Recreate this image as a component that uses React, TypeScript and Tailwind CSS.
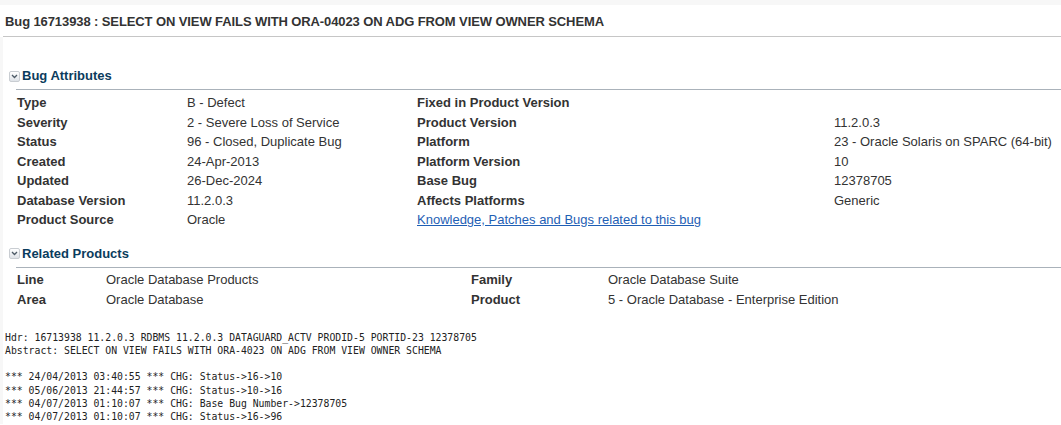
import React from "react";

const sans = { fontFamily: '"Liberation Sans", Arial, sans-serif' };

function Toggle() {
  return (
    <span className="inline-flex items-center justify-center w-[11px] h-[11px] rounded-[2px] border border-[#c9cdd2] bg-gradient-to-b from-[#ffffff] to-[#dfe3e8] mr-[2px]">
      <svg width="7" height="5" viewBox="0 0 7 5">
        <path d="M1 1 L3.5 3.5 L6 1" stroke="#4d5a66" strokeWidth="1.3" fill="none" />
      </svg>
    </span>
  );
}

function SectionHeader({ title }: { title: string }) {
  return (
    <div>
      <div className="flex items-center pl-[6px] h-[18px]">
        <Toggle />
        <span className="text-[13px] font-bold text-[#0b3c5d]">{title}</span>
      </div>
      <div className="ml-[13px] h-px bg-[#aab2ba] mt-[4px]" />
    </div>
  );
}

const attrs: [string, string, string, React.ReactNode][] = [
  ["Type", "B - Defect", "Fixed in Product Version", ""],
  ["Severity", "2 - Severe Loss of Service", "Product Version", "11.2.0.3"],
  ["Status", "96 - Closed, Duplicate Bug", "Platform", "23 - Oracle Solaris on SPARC (64-bit)"],
  ["Created", "24-Apr-2013", "Platform Version", "10"],
  ["Updated", "26-Dec-2024", "Base Bug", "12378705"],
  ["Database Version", "11.2.0.3", "Affects Platforms", "Generic"],
  ["Product Source", "Oracle", "", ""],
];

export default function App() {
  return (
    <div className="w-[1061px] h-[425px] bg-white text-[#333333] overflow-hidden" style={sans}>
      <div className="h-[5px] bg-[#f7f7f7]" />
      <div className="pl-[5px] pt-[9px] pb-[7px] text-[13px] font-bold text-[#333333] leading-[15px] tracking-[-0.1px]">
        Bug 16713938 : SELECT ON VIEW FAILS WITH ORA-04023 ON ADG FROM VIEW OWNER SCHEMA
      </div>
      <div className="ml-[3px] h-px bg-[#c6c6c6]" />
      <div className="flex">
        <div className="w-[3px] bg-[#f7f7f7] shrink-0" />
        <div className="flex-1">
          <div className="h-[30px]" />
          <SectionHeader title="Bug Attributes" />
          <div className="pt-[3px] text-[13px] leading-[19.5px]">
            {attrs.map(([l1, v1, l2, v2], i) => (
              <div key={i} className="flex h-[19.5px] items-center">
                <div className="w-[184px] pl-[14px] font-bold">{l1}</div>
                <div className="w-[230px]">{v1}</div>
                {i === 6 ? (
                  <a className="text-[#1f5fb5] underline" href="#">
                    Knowledge, Patches and Bugs related to this bug
                  </a>
                ) : (
                  <>
                    <div className="w-[417px] font-bold">{l2}</div>
                    <div>{v2}</div>
                  </>
                )}
              </div>
            ))}
          </div>
          <div className="h-[15px]" />
          <SectionHeader title="Related Products" />
          <div className="pt-[2px] text-[13px] leading-[20px]">
            {[
              ["Line", "Oracle Database Products", "Family", "Oracle Database Suite"],
              ["Area", "Oracle Database", "Product", "5 - Oracle Database - Enterprise Edition"],
            ].map(([a, b, c, d], i) => (
              <div key={i} className="flex h-[20px] items-center">
                <div className="w-[103px] pl-[14px] font-bold">{a}</div>
                <div className="w-[365px]">{b}</div>
                <div className="w-[137px] font-bold">{c}</div>
                <div>{d}</div>
              </div>
            ))}
          </div>
          <pre
            className="mt-[21px] pl-[2px] text-[9.8px] leading-[13.3px] text-[#222222]"
            style={{ fontFamily: '"DejaVu Sans Mono", "Liberation Mono", monospace' }}
          >{`Hdr: 16713938 11.2.0.3 RDBMS 11.2.0.3 DATAGUARD_ACTV PRODID-5 PORTID-23 12378705
Abstract: SELECT ON VIEW FAILS WITH ORA-4023 ON ADG FROM VIEW OWNER SCHEMA

*** 24/04/2013 03:40:55 *** CHG: Status->16->10
*** 05/06/2013 21:44:57 *** CHG: Status->10->16
*** 04/07/2013 01:10:07 *** CHG: Base Bug Number->12378705
*** 04/07/2013 01:10:07 *** CHG: Status->16->96`}</pre>
        </div>
      </div>
    </div>
  );
}
